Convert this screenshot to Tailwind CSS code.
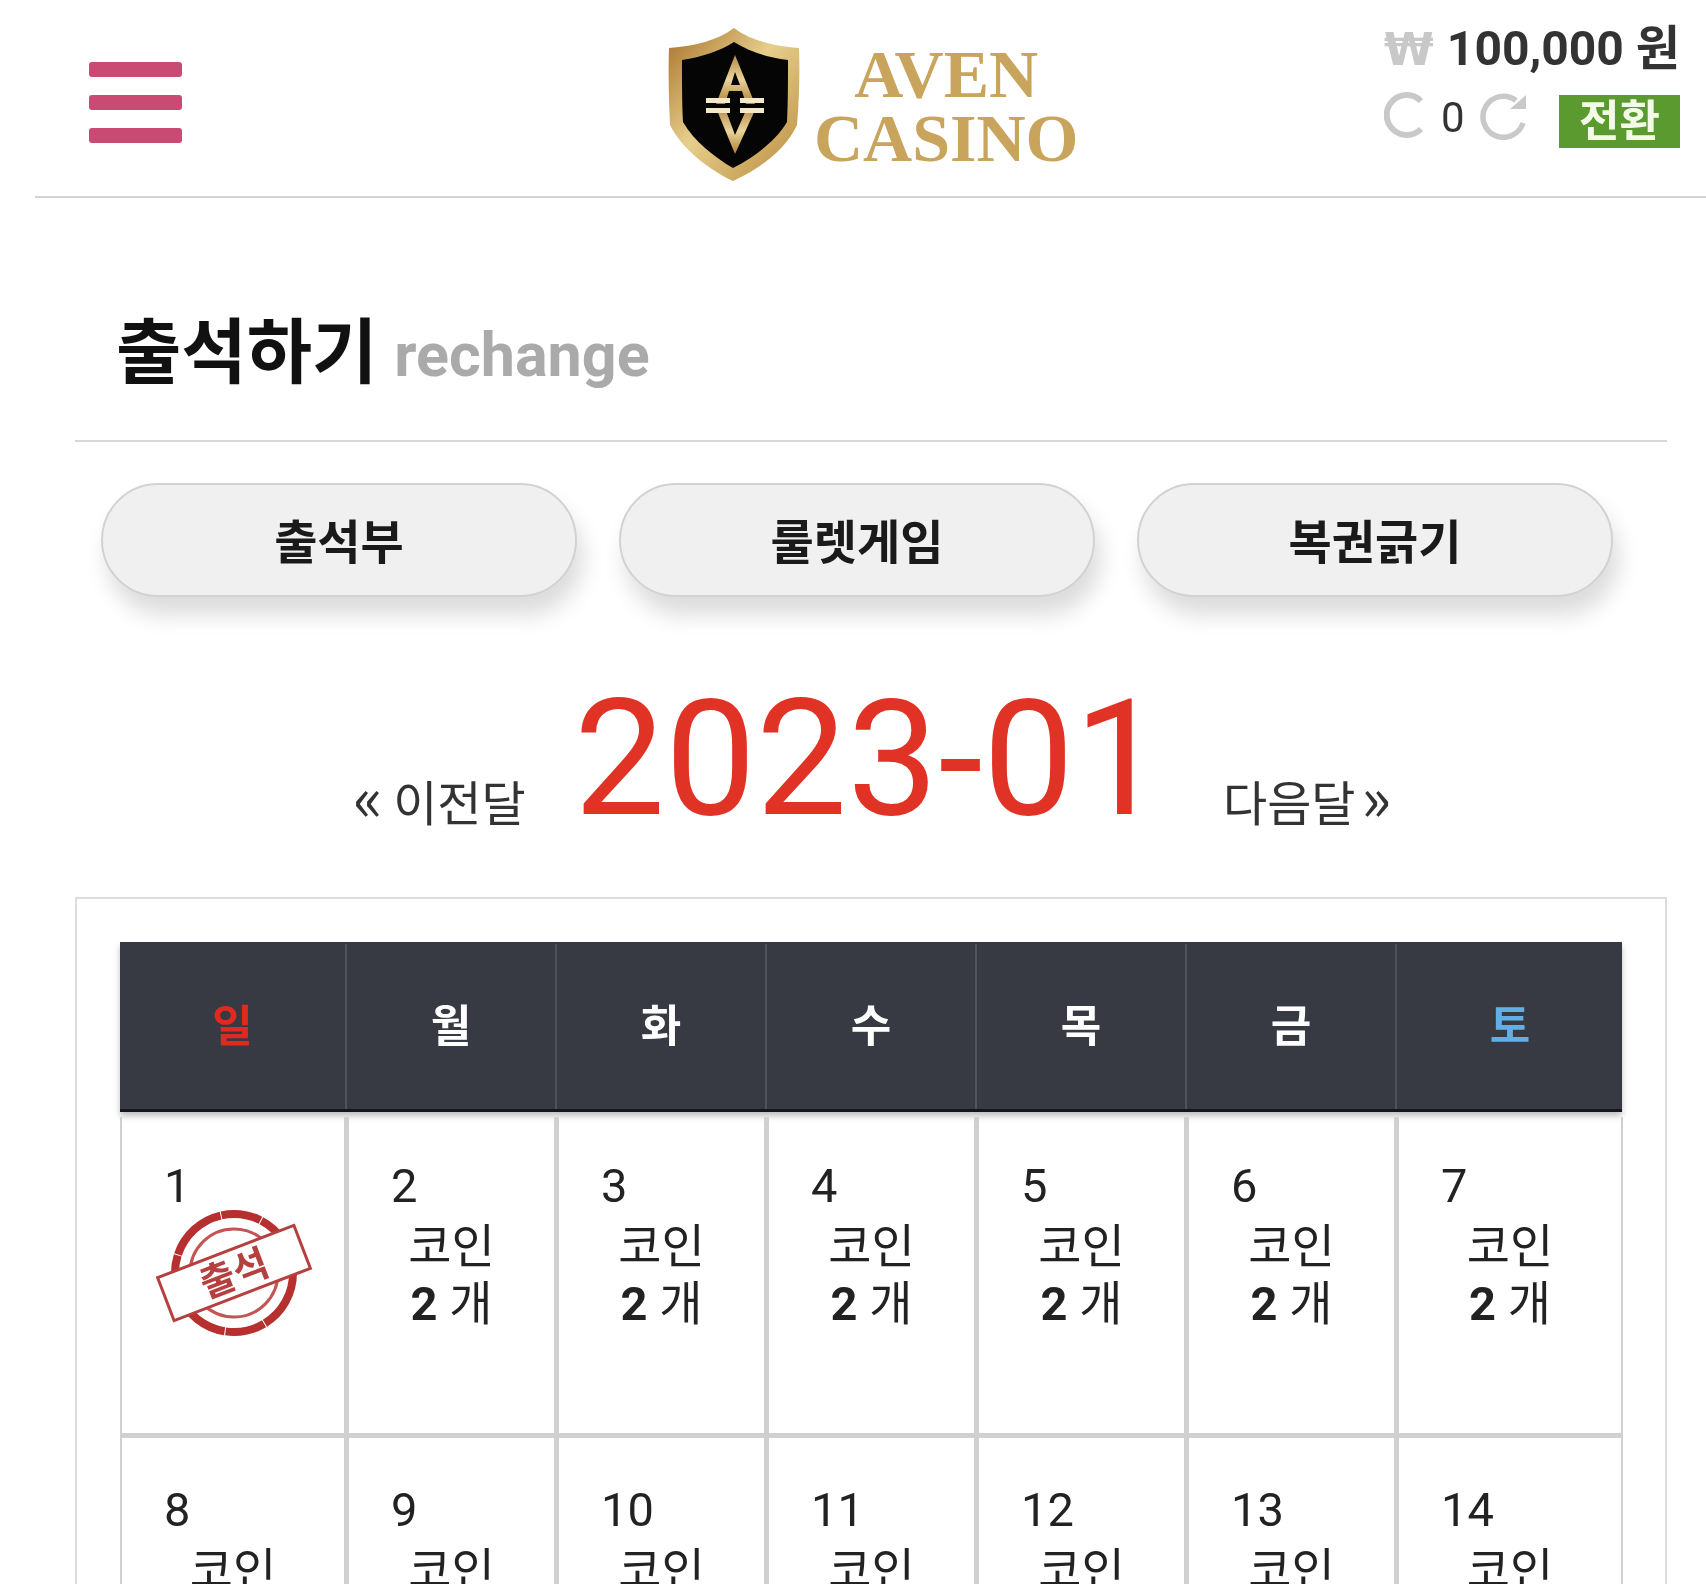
<!DOCTYPE html>
<html lang="ko">
<head>
  <meta charset="UTF-8"/>
  <meta name="viewport" content="width=device-width, initial-scale=1.0"/>
  <title>출석하기 – AVEN CASINO</title>
  <script src="https://cdn.jsdelivr.net/npm/@tailwindcss/browser@4"></script>
</head>
<body class="bg-white text-[#222] h-[1584px] overflow-hidden blur-[0.5px] font-['Roboto','Noto_Sans_CJK_KR',sans-serif]">

  <!-- Header -->
  <header class="ml-[35px] h-[198px] border-b-2 border-[#d4d4d4] flex items-start">
    <button class="mt-[62px] ml-[54px] w-[93px] flex flex-col gap-[18px] shrink-0">
      <span class="h-[15px] rounded-[3px] bg-[#c94a72]"></span>
      <span class="h-[15px] rounded-[3px] bg-[#c94a72]"></span>
      <span class="h-[15px] rounded-[3px] bg-[#c94a72]"></span>
    </button>

    <a href="#" class="ml-[486px] mt-[27px] flex items-start shrink-0">
      <svg viewBox="0 0 134 156" class="w-[134px] h-[156px]">
        <defs>
          <linearGradient id="gold" x1="0" y1="0" x2="1" y2="1">
            <stop offset="0" stop-color="#a8712a"/>
            <stop offset="0.45" stop-color="#e6cf8c"/>
            <stop offset="1" stop-color="#b98a3c"/>
          </linearGradient>
          <linearGradient id="letter" x1="0" y1="0" x2="0" y2="1">
            <stop offset="0" stop-color="#b98a46"/>
            <stop offset="0.5" stop-color="#e8d49a"/>
            <stop offset="1" stop-color="#b07f36"/>
          </linearGradient>
        </defs>
        <path d="M66 1C50 13 28 19 1 21C0 48 1 74 2 98C14 122 40 142 65 154C92 142 118 122 129 98C131 74 132 48 131 21C104 19 82 13 66 1Z" fill="url(#gold)"/>
        <path d="M66 15C52 24 34 30 14 33C14 56 14 76 15 95C26 114 46 130 65 141C86 130 108 114 119 95C120 76 120 56 120 33C98 30 80 24 66 15Z" fill="#050505"/>
        <path d="M67 28L48 77H57L61 64H74L78 77H87ZM63 58L67 45L72 58Z" fill="url(#letter)" fill-rule="evenodd"/>
        <path d="M48 81L67 127L88 81H79L67 108L57 81Z" fill="url(#letter)"/>
        <path d="M38 71H62V76H38ZM72 71H96V76H72ZM38 81H62V86H38ZM72 81H96V86H72Z" fill="#f3e8c8"/>
      </svg>
      <div class="ml-[12px] mt-[15px] font-['Liberation_Serif',serif] font-bold text-[#c9a45c] text-center leading-[64px] text-[68px]">
        <div>AVEN</div>
        <div>CASINO</div>
      </div>
    </a>

    <div class="ml-auto mr-[26px] mt-[26px] w-[296px] shrink-0">
      <div class="flex items-center h-[46px] font-bold text-[48px] leading-none whitespace-nowrap">
        <span class="text-[#c8c8c8] w-[63px] font-['DejaVu_Sans',sans-serif] text-[45px]">₩</span>
        <span class="text-[#333]">100,000 원</span>
      </div>
      <div class="mt-[20px] flex items-start h-[56px]">
        <svg viewBox="0 0 40 46" fill="none" class="w-[40px] h-[46px]" stroke="#c9c9c9" stroke-width="6">
          <path d="M37 9A20 20 0 1 0 37 37"/>
        </svg>
        <span class="ml-[17px] mt-[5px] text-[42px] leading-none text-[#333]">0</span>
        <svg viewBox="0 0 47 47" fill="none" class="ml-[15px] mt-[1px] w-[47px] h-[47px]" stroke="#c9c9c9" stroke-width="5.5">
          <path d="M43 30A20.5 20.5 0 1 1 36 7.5"/>
          <path d="M46 2V16H30Z" stroke="none" fill="#c9c9c9"/>
        </svg>
        <span class="ml-auto mt-[3px] w-[121px] h-[53px] bg-[#5a9a2f] text-[#f3fbe8] font-bold text-[44px] leading-none flex items-center justify-center">전환</span>
      </div>
    </div>
  </header>

  <main class="ml-[75px] mr-[39px]">
    <!-- Title -->
    <div class="h-[244px] border-b-2 border-[#d8d8d8] flex items-end pb-[51px] pl-[41px] gap-[17px]">
      <h1 class="font-bold text-[71px] leading-[72px] text-[#111] whitespace-nowrap">출석하기</h1>
      <span class="font-bold text-[61px] leading-[62px] mb-[3px] text-[#aaa]">rechange</span>
    </div>

    <!-- Tabs -->
    <div class="mt-[41px] ml-[26px] flex gap-[42px]">
      <button class="w-[476px] h-[114px] pt-[6px] rounded-full border-2 border-[#d2d2d2] bg-[#f0f0f0] text-[47px] font-bold text-[#1a1a1a] shadow-[6px_18px_22px_rgba(0,0,0,0.14)]">출석부</button>
      <button class="w-[476px] h-[114px] pt-[6px] rounded-full border-2 border-[#d2d2d2] bg-[#f0f0f0] text-[47px] font-bold text-[#1a1a1a] shadow-[6px_18px_22px_rgba(0,0,0,0.14)]">룰렛게임</button>
      <button class="w-[476px] h-[114px] pt-[6px] rounded-full border-2 border-[#d2d2d2] bg-[#f0f0f0] text-[47px] font-bold text-[#1a1a1a] shadow-[6px_18px_22px_rgba(0,0,0,0.14)]">복권긁기</button>
    </div>

    <!-- Month nav -->
    <div class="mt-[97px] h-[130px] flex items-end pl-[278px] leading-none">
      <a href="#" class="text-[48px] font-['Noto_Sans_CJK_KR',sans-serif] text-[#333] -mb-[1px] w-[221px] whitespace-nowrap"><span class="text-[62px] leading-none -mr-[3px]">«</span> 이전달</a>
      <span class="text-[162px] text-[#e03325] w-[649px] leading-[130px] whitespace-nowrap">2023-01</span>
      <a href="#" class="text-[48px] font-['Noto_Sans_CJK_KR',sans-serif] text-[#333] -mb-[1px] whitespace-nowrap">다음달<span class="text-[62px] leading-none ml-[6px]">»</span></a>
    </div>

    <!-- Calendar -->
    <section class="mt-[73px] border-2 border-[#ddd] pt-[43px] px-[43px] h-[700px]">
      <div class="grid grid-cols-[227px_repeat(5,210px)_226px] h-[170px] pt-[2px] bg-[#373a42] border-b-[3px] border-[#15171b] shadow-[0_4px_6px_rgba(0,0,0,0.25)] text-[44px] font-bold text-white text-center">
        <div class="flex items-center justify-center border-r-2 border-[#50535a] text-[#e02a20]">일</div>
        <div class="flex items-center justify-center border-r-2 border-[#50535a]">월</div>
        <div class="flex items-center justify-center border-r-2 border-[#50535a]">화</div>
        <div class="flex items-center justify-center border-r-2 border-[#50535a]">수</div>
        <div class="flex items-center justify-center border-r-2 border-[#50535a]">목</div>
        <div class="flex items-center justify-center border-r-2 border-[#50535a]">금</div>
        <div class="flex items-center justify-center text-[#62aee6]">토</div>
      </div>

      <div class="mt-[5px] grid grid-cols-[229px_repeat(5,210px)_224px] auto-rows-[321px] text-[47px] leading-[59px] text-[#222]">
        <!-- Week 1 -->
        <div class="relative border-x-2 border-r-[5px] border-b-[5px] border-[#d0d0d0] pt-[39px]">
          <div class="pl-[42px]">1</div>
          <svg viewBox="0 0 170 130" class="absolute left-[27px] top-[91px] w-[170px] h-[130px]" fill="none">
            <circle cx="85" cy="65" r="59" stroke="#b5302f" stroke-width="8" stroke-dasharray="60 1 40 1"/>
            <circle cx="85" cy="65" r="44" stroke="#c45556" stroke-width="3"/>
            <g transform="rotate(-21 85 65)">
              <rect x="12" y="42" width="146" height="46" fill="#fff" stroke="#b5403f" stroke-width="3"/>
              <text x="85" y="79" text-anchor="middle" font-size="38" font-weight="600" fill="#b5403f" font-family="Noto Sans CJK KR">출석</text>
            </g>
          </svg>
        </div>
        <div class="border-r-[5px] border-b-[5px] border-[#d0d0d0] pt-[39px]"><div class="pl-[42px]">2</div><p class="mt-[3px] leading-[57px] text-center">코인<br><b class="font-bold">2</b> 개</p></div>
        <div class="border-r-[5px] border-b-[5px] border-[#d0d0d0] pt-[39px]"><div class="pl-[42px]">3</div><p class="mt-[3px] leading-[57px] text-center">코인<br><b class="font-bold">2</b> 개</p></div>
        <div class="border-r-[5px] border-b-[5px] border-[#d0d0d0] pt-[39px]"><div class="pl-[42px]">4</div><p class="mt-[3px] leading-[57px] text-center">코인<br><b class="font-bold">2</b> 개</p></div>
        <div class="border-r-[5px] border-b-[5px] border-[#d0d0d0] pt-[39px]"><div class="pl-[42px]">5</div><p class="mt-[3px] leading-[57px] text-center">코인<br><b class="font-bold">2</b> 개</p></div>
        <div class="border-r-[5px] border-b-[5px] border-[#d0d0d0] pt-[39px]"><div class="pl-[42px]">6</div><p class="mt-[3px] leading-[57px] text-center">코인<br><b class="font-bold">2</b> 개</p></div>
        <div class="border-r-2 border-b-[5px] border-[#d0d0d0] pt-[39px]"><div class="pl-[42px]">7</div><p class="mt-[3px] leading-[57px] text-center">코인<br><b class="font-bold">2</b> 개</p></div>
        <!-- Week 2 -->
        <div class="border-x-2 border-r-[5px] border-[#d0d0d0] pt-[42px]"><div class="pl-[42px]">8</div><p class="mt-[3px] leading-[57px] text-center">코인<br><b class="font-bold">2</b> 개</p></div>
        <div class="border-r-[5px] border-[#d0d0d0] pt-[42px]"><div class="pl-[42px]">9</div><p class="mt-[3px] leading-[57px] text-center">코인<br><b class="font-bold">2</b> 개</p></div>
        <div class="border-r-[5px] border-[#d0d0d0] pt-[42px]"><div class="pl-[42px]">10</div><p class="mt-[3px] leading-[57px] text-center">코인<br><b class="font-bold">2</b> 개</p></div>
        <div class="border-r-[5px] border-[#d0d0d0] pt-[42px]"><div class="pl-[42px]">11</div><p class="mt-[3px] leading-[57px] text-center">코인<br><b class="font-bold">2</b> 개</p></div>
        <div class="border-r-[5px] border-[#d0d0d0] pt-[42px]"><div class="pl-[42px]">12</div><p class="mt-[3px] leading-[57px] text-center">코인<br><b class="font-bold">2</b> 개</p></div>
        <div class="border-r-[5px] border-[#d0d0d0] pt-[42px]"><div class="pl-[42px]">13</div><p class="mt-[3px] leading-[57px] text-center">코인<br><b class="font-bold">2</b> 개</p></div>
        <div class="border-r-2 border-[#d0d0d0] pt-[42px]"><div class="pl-[42px]">14</div><p class="mt-[3px] leading-[57px] text-center">코인<br><b class="font-bold">2</b> 개</p></div>
      </div>
    </section>
  </main>
</body>
</html>
